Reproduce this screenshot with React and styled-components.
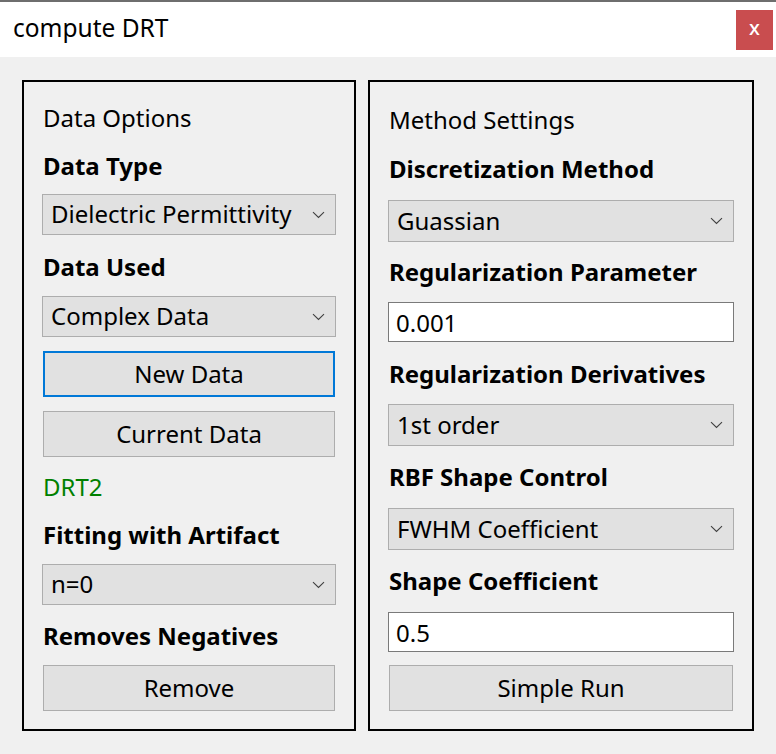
import React from 'react';
import styled, { createGlobalStyle } from 'styled-components';

const GlobalStyle = createGlobalStyle`
  html, body {
    margin: 0;
    padding: 0;
    background: #f0f0f0;
  }
  * {
    box-sizing: border-box;
  }
`;

const Window = styled.div`
  width: 776px;
  height: 754px;
  display: flex;
  flex-direction: column;
  background: #f0f0f0;
  border-top: 2px solid #6e6e6e;
  font-family: 'Noto Sans', 'Open Sans', sans-serif;
  color: #000;
  overflow: hidden;
`;

const TitleBar = styled.div`
  height: 55px;
  flex-shrink: 0;
  background: #fff;
  display: flex;
  align-items: center;
  justify-content: space-between;
  padding: 0 3px 0 13px;
`;

const Title = styled.span`
  font-size: 24.5px;
  line-height: 1;
  margin-top: -2px;
`;

const CloseButton = styled.button`
  width: 37px;
  height: 40px;
  margin-top: 1px;
  border: none;
  background: #c94d4f;
  color: #fff;
  font-family: 'Noto Sans', sans-serif;
  font-size: 20px;
  font-weight: 500;
  line-height: 1;
  padding: 0 0 4px;
  display: flex;
  align-items: center;
  justify-content: center;
`;

const Body = styled.div`
  display: flex;
  gap: 12px;
  padding: 23px 22px 0 22px;
`;

const Panel = styled.div`
  width: ${(p) => p.width}px;
  height: 651px;
  border: 2px solid #000;
  display: flex;
  flex-direction: column;
  padding: 21px 18px 0 18px;
`;

const Caption = styled.div`
  height: 30px;
  line-height: 30px;
  font-size: 24px;
  padding-left: 1px;
  margin-top: ${(p) => p.top || 0}px;
`;

const Label = styled.div`
  height: 30px;
  line-height: 30px;
  font-size: 24px;
  font-weight: 700;
  padding-left: 1px;
  white-space: nowrap;
  margin-top: ${(p) => p.top}px;
  margin-bottom: ${(p) => p.bottom}px;
`;

const Status = styled(Caption)`
  color: #008000;
`;

const Select = styled.div`
  height: ${(p) => p.h || 41}px;
  background: #e1e1e1;
  border: 1px solid #adadad;
  display: flex;
  align-items: center;
  justify-content: space-between;
  padding: 0 10px 0 8px;
  font-size: 24px;
`;

const SelectText = styled.span`
  line-height: 1;
  margin-top: -1px;
  white-space: nowrap;
`;

const Input = styled.div`
  height: 40px;
  background: #fff;
  border: 1px solid #7a7a7a;
  display: flex;
  align-items: center;
  padding: 0 7px;
  font-size: 24px;
`;

const Button = styled.div`
  height: 46px;
  margin: ${(p) => p.top || 0}px 1px 0 1px;
  background: #e1e1e1;
  border: ${(p) => (p.focused ? '2px solid #0078d7' : '1px solid #adadad')};
  display: flex;
  align-items: center;
  justify-content: center;
  font-size: 24px;
  padding-bottom: 2px;
`;

const Chevron = () => (
  <svg width="13" height="8" viewBox="0 0 13 8" fill="none">
    <path d="M1 1.2 L6.5 6.5 L12 1.2" stroke="#404040" strokeWidth="1.1" />
  </svg>
);

const Dropdown = ({ value, h }) => (
  <Select h={h}>
    <SelectText>{value}</SelectText>
    <Chevron />
  </Select>
);

const App = () => {
  return (
    <Window>
      <GlobalStyle />
      <TitleBar>
        <Title>compute DRT</Title>
        <CloseButton>x</CloseButton>
      </TitleBar>
      <Body>
        <Panel width={334}>
          <Caption>Data Options</Caption>
          <Label top={18} bottom={13}>Data Type</Label>
          <Dropdown value="Dielectric Permittivity" />
          <Label top={17} bottom={14}>Data Used</Label>
          <Dropdown value="Complex Data" />
          <Button focused top={14}>New Data</Button>
          <Button top={14}>Current Data</Button>
          <Status top={15}>DRT2</Status>
          <Label top={18} bottom={14}>Fitting with Artifact</Label>
          <Dropdown value="n=0" />
          <Label top={16} bottom={14}>Removes Negatives</Label>
          <Button top={0}>Remove</Button>
        </Panel>
        <Panel width={386}>
          <Caption top={2}>Method Settings</Caption>
          <Label top={19} bottom={16}>Discretization Method</Label>
          <Dropdown value="Guassian" h={42} />
          <Label top={15} bottom={15}>Regularization Parameter</Label>
          <Input>0.001</Input>
          <Label top={17} bottom={15}>Regularization Derivatives</Label>
          <Dropdown value="1st order" h={42} />
          <Label top={16} bottom={16}>RBF Shape Control</Label>
          <Dropdown value="FWHM Coefficient" h={42} />
          <Label top={16} bottom={16}>Shape Coefficient</Label>
          <Input>0.5</Input>
          <Button top={13}>Simple Run</Button>
        </Panel>
      </Body>
    </Window>
  );
};

export default App;
